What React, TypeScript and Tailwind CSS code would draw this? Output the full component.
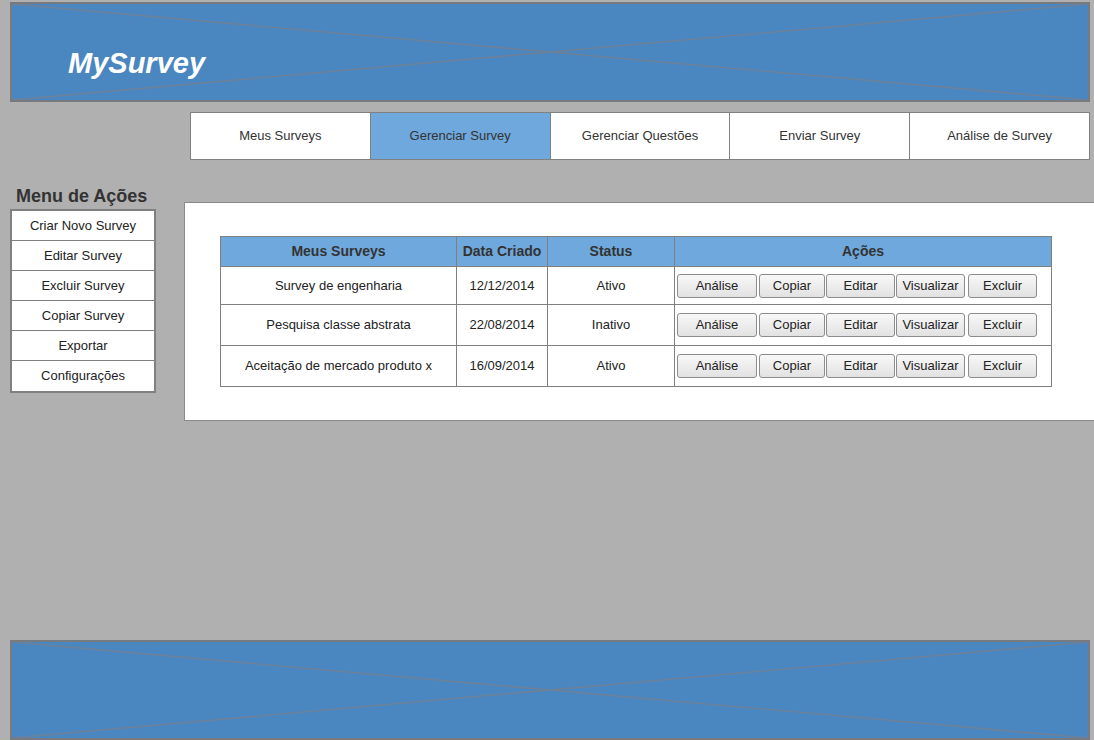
import React from "react";

const tabs = ["Meus Surveys", "Gerenciar Survey", "Gerenciar Questões", "Enviar Survey", "Análise de Survey"];
const menuItems = ["Criar Novo Survey", "Editar Survey", "Excluir Survey", "Copiar Survey", "Exportar", "Configurações"];

const surveys = [
  { name: "Survey de engenharia", date: "12/12/2014", status: "Ativo", h: "h-[38px]" },
  { name: "Pesquisa classe abstrata", date: "22/08/2014", status: "Inativo", h: "h-[41px]" },
  { name: "Aceitação de mercado produto x", date: "16/09/2014", status: "Ativo", h: "h-[41px]" },
];

const actions = [
  { label: "Análise", w: "w-[80px]", ml: "ml-0" },
  { label: "Copiar", w: "w-[66px]", ml: "ml-[2px]" },
  { label: "Editar", w: "w-[69px]", ml: "ml-[1px]" },
  { label: "Visualizar", w: "w-[69px]", ml: "ml-[1px]" },
  { label: "Excluir", w: "w-[69px]", ml: "ml-[3px]" },
];

// placeholder box with the crossed lines
function BannerBox({ children }: { children?: React.ReactNode }) {
  return (
    <div className="relative h-full border-2 border-[#777b80] bg-[#4a86c0]">
      <svg className="absolute inset-0 h-full w-full" preserveAspectRatio="none" viewBox="0 0 100 100">
        <line x1="0" y1="0" x2="100" y2="100" stroke="#6f8196" strokeWidth="1.4" vectorEffect="non-scaling-stroke" />
        <line x1="0" y1="100" x2="100" y2="0" stroke="#6f8196" strokeWidth="1.4" vectorEffect="non-scaling-stroke" />
      </svg>
      {children}
    </div>
  );
}

function ActionButton({ label, w, ml }: { label: string; w: string; ml: string }) {
  return (
    <button
      className={`${w} ${ml} h-[24px] rounded-[3px] border border-[#8c8c8c] bg-gradient-to-b from-[#f8f8f8] to-[#e2e2e2] text-[13px] text-[#222]`}
    >
      {label}
    </button>
  );
}

export default function App() {
  return (
    <div className="flex h-[740px] w-full flex-col overflow-hidden bg-[#b0b0b0] font-['Liberation_Sans',Arial,sans-serif]">
      <div className="ml-[10px] mr-[4px] mt-[2px] h-[100px]">
        <BannerBox>
          <div className="absolute left-[56px] top-[38px] text-[29px] font-bold italic text-white">MySurvey</div>
        </BannerBox>
      </div>

      <div className="ml-[190px] mt-[10px] flex h-[48px] w-[900px] border border-[#808080] bg-white">
        {tabs.map((t, i) => (
          <div
            key={t}
            className={`flex flex-1 items-center justify-center text-[13px] text-[#333] ${
              i > 0 ? "border-l border-[#808080]" : ""
            } ${i === 1 ? "bg-[#6fa8dc]" : "bg-white"}`}
          >
            {t}
          </div>
        ))}
      </div>

      <div className="flex flex-1 items-start">
        <div className="ml-[10px] mt-[24px] w-[146px]">
          <div className="whitespace-nowrap pl-[6px] text-[18px] font-bold leading-[25px] text-[#333]">Menu de Ações</div>
          <div className="border-2 border-[#808080] bg-white">
            {menuItems.map((m, i) => (
              <div
                key={m}
                className={`flex h-[30px] items-center justify-center text-[13px] text-[#222] ${
                  i < menuItems.length - 1 ? "border-b border-[#808080]" : ""
                }`}
              >
                {m}
              </div>
            ))}
          </div>
        </div>

        <div className="ml-[28px] mt-[42px] h-[219px] flex-1 border border-r-0 border-[#8a8a8a] bg-white pl-[35px] pt-[33px]">
          <table className="w-[832px] table-fixed border-collapse text-[13px] text-[#222]">
            <colgroup>
              <col className="w-[236px]" />
              <col className="w-[91px]" />
              <col className="w-[127px]" />
              <col className="w-[377px]" />
            </colgroup>
            <thead>
              <tr className="h-[30px] bg-[#6fa8dc] text-[14px] text-[#333]">
                <th className="border border-[#808080] font-bold">Meus Surveys</th>
                <th className="border border-[#808080] font-bold">Data Criado</th>
                <th className="border border-[#808080] font-bold">Status</th>
                <th className="border border-[#808080] font-bold">Ações</th>
              </tr>
            </thead>
            <tbody>
              {surveys.map((s) => (
                <tr key={s.name} className={s.h}>
                  <td className="border border-[#808080] text-center">{s.name}</td>
                  <td className="border border-[#808080] text-center">{s.date}</td>
                  <td className="border border-[#808080] text-center">{s.status}</td>
                  <td className="border border-[#808080] pl-[2px]">
                    <div className="flex">
                      {actions.map((a) => (
                        <ActionButton key={a.label} label={a.label} w={a.w} ml={a.ml} />
                      ))}
                    </div>
                  </td>
                </tr>
              ))}
            </tbody>
          </table>
        </div>
      </div>

      <div className="ml-[10px] mr-[4px] h-[100px]">
        <BannerBox />
      </div>
    </div>
  );
}
